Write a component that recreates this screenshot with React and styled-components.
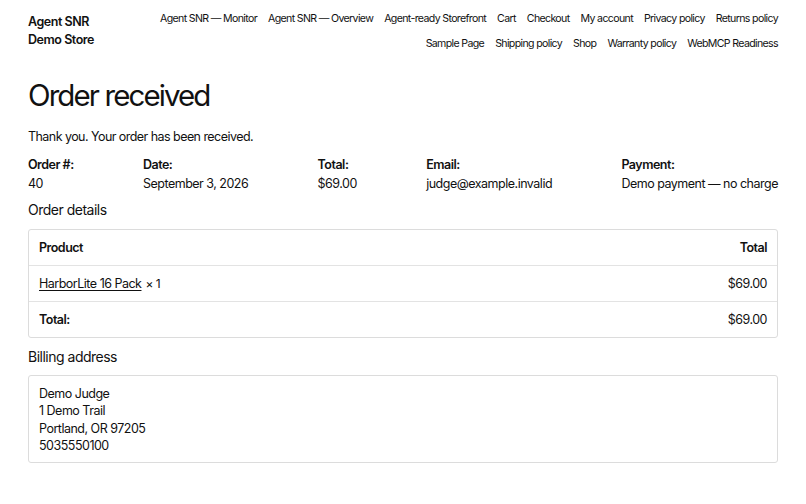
import React from "react";
import styled, { createGlobalStyle } from "styled-components";

const Global = createGlobalStyle`
  html, body { margin: 0; padding: 0; background: #fff; }
  body {
    font-family: Inter, "Noto Sans", sans-serif;
    color: #111;
    -webkit-font-smoothing: antialiased;
  }
  * { box-sizing: border-box; }
`;

const Page = styled.div`
  padding: 0 28px;
  width: 806px;
`;

const Header = styled.header`
  display: flex;
  justify-content: space-between;
  align-items: flex-start;
  padding-top: 10px;
`;

const SiteTitle = styled.div`
  font-size: 12.5px;
  font-weight: 600;
  line-height: 18px;
  letter-spacing: -0.45px;
  padding-top: 3px;
`;

const Nav = styled.nav`
  display: flex;
  flex-wrap: wrap;
  justify-content: flex-end;
  column-gap: 11px;
  row-gap: 7px;
  width: 640px;
`;

const NavLink = styled.a`
  font-size: 10.6px;
  line-height: 18px;
  letter-spacing: -0.65px;
  color: #111;
  text-decoration: none;
`;

const Main = styled.main`
  padding-top: 22px;
`;

const Title = styled.h1`
  margin: 0;
  font-size: 29.5px;
  font-weight: 400;
  line-height: 40px;
  letter-spacing: -1.9px;
`;

const Notice = styled.p`
  margin: 13px 0 0;
  font-size: 12.5px;
  line-height: 18px;
  letter-spacing: -0.55px;
`;

const Overview = styled.ul`
  list-style: none;
  margin: 9px 0 0;
  padding: 0;
  display: flex;
  justify-content: space-between;
`;

const OverviewItem = styled.li`
  display: flex;
  flex-direction: column;
  font-size: 12.5px;
  line-height: 19px;
  letter-spacing: -0.5px;
`;

const Label = styled.strong`
  font-weight: 600;
`;

const SectionTitle = styled.h2`
  margin: ${(p) => p.$mt}px 0 0;
  font-size: 14px;
  font-weight: 400;
  line-height: 20px;
  letter-spacing: -0.5px;
`;

const Box = styled.div`
  margin-top: ${(p) => p.$mt}px;
  border: 1px solid #dcdcdc;
  border-radius: 3px;
`;

const Row = styled.div`
  display: flex;
  justify-content: space-between;
  align-items: center;
  height: 35px;
  padding: 0 10px;
  font-size: 12.5px;
  letter-spacing: -0.5px;
  font-weight: ${(p) => (p.$bold ? 600 : 400)};
  & + & { border-top: 1px solid #e3e3e3; height: 36px; }
`;

const ProductLink = styled.a`
  color: #111;
  text-decoration: underline;
  text-underline-offset: 2px;
  text-decoration-thickness: 1px;
`;

const Qty = styled.span`
  margin-left: 4px;
  font-size: 12px;
`;

const Address = styled.address`
  font-style: normal;
  padding: 9px 10px 8px;
  font-size: 12.5px;
  line-height: 17.3px;
  letter-spacing: -0.5px;
`;

const navItems = [
  "Agent SNR — Monitor",
  "Agent SNR — Overview",
  "Agent-ready Storefront",
  "Cart",
  "Checkout",
  "My account",
  "Privacy policy",
  "Returns policy",
  "Sample Page",
  "Shipping policy",
  "Shop",
  "Warranty policy",
  "WebMCP Readiness",
];

const overview = [
  ["Order #:", "40"],
  ["Date:", "September 3, 2026"],
  ["Total:", "$69.00"],
  ["Email:", "judge@example.invalid"],
  ["Payment:", "Demo payment — no charge"],
];

export default function App() {
  return (
    <Page>
      <Global />
      <Header>
        <SiteTitle>
          Agent SNR
          <br />
          Demo Store
        </SiteTitle>
        <Nav>
          {navItems.map((n) => (
            <NavLink key={n} href="#">
              {n}
            </NavLink>
          ))}
        </Nav>
      </Header>
      <Main>
        <Title>Order received</Title>
        <Notice>Thank you. Your order has been received.</Notice>
        <Overview>
          {overview.map(([l, v]) => (
            <OverviewItem key={l}>
              <Label>{l}</Label>
              <span>{v}</span>
            </OverviewItem>
          ))}
        </Overview>
        <SectionTitle $mt={7}>Order details</SectionTitle>
        <Box $mt={9}>
          <Row $bold>
            <span>Product</span>
            <span>Total</span>
          </Row>
          <Row>
            <span>
              <ProductLink href="#">HarborLite 16 Pack</ProductLink>
              <Qty>×&nbsp;1</Qty>
            </span>
            <span>$69.00</span>
          </Row>
          <Row>
            <Label>Total:</Label>
            <span>$69.00</span>
          </Row>
        </Box>
        <SectionTitle $mt={9}>Billing address</SectionTitle>
        <Box $mt={8}>
          <Address>
            Demo Judge
            <br />1 Demo Trail
            <br />
            Portland, OR 97205
            <br />
            5035550100
          </Address>
        </Box>
      </Main>
    </Page>
  );
}
